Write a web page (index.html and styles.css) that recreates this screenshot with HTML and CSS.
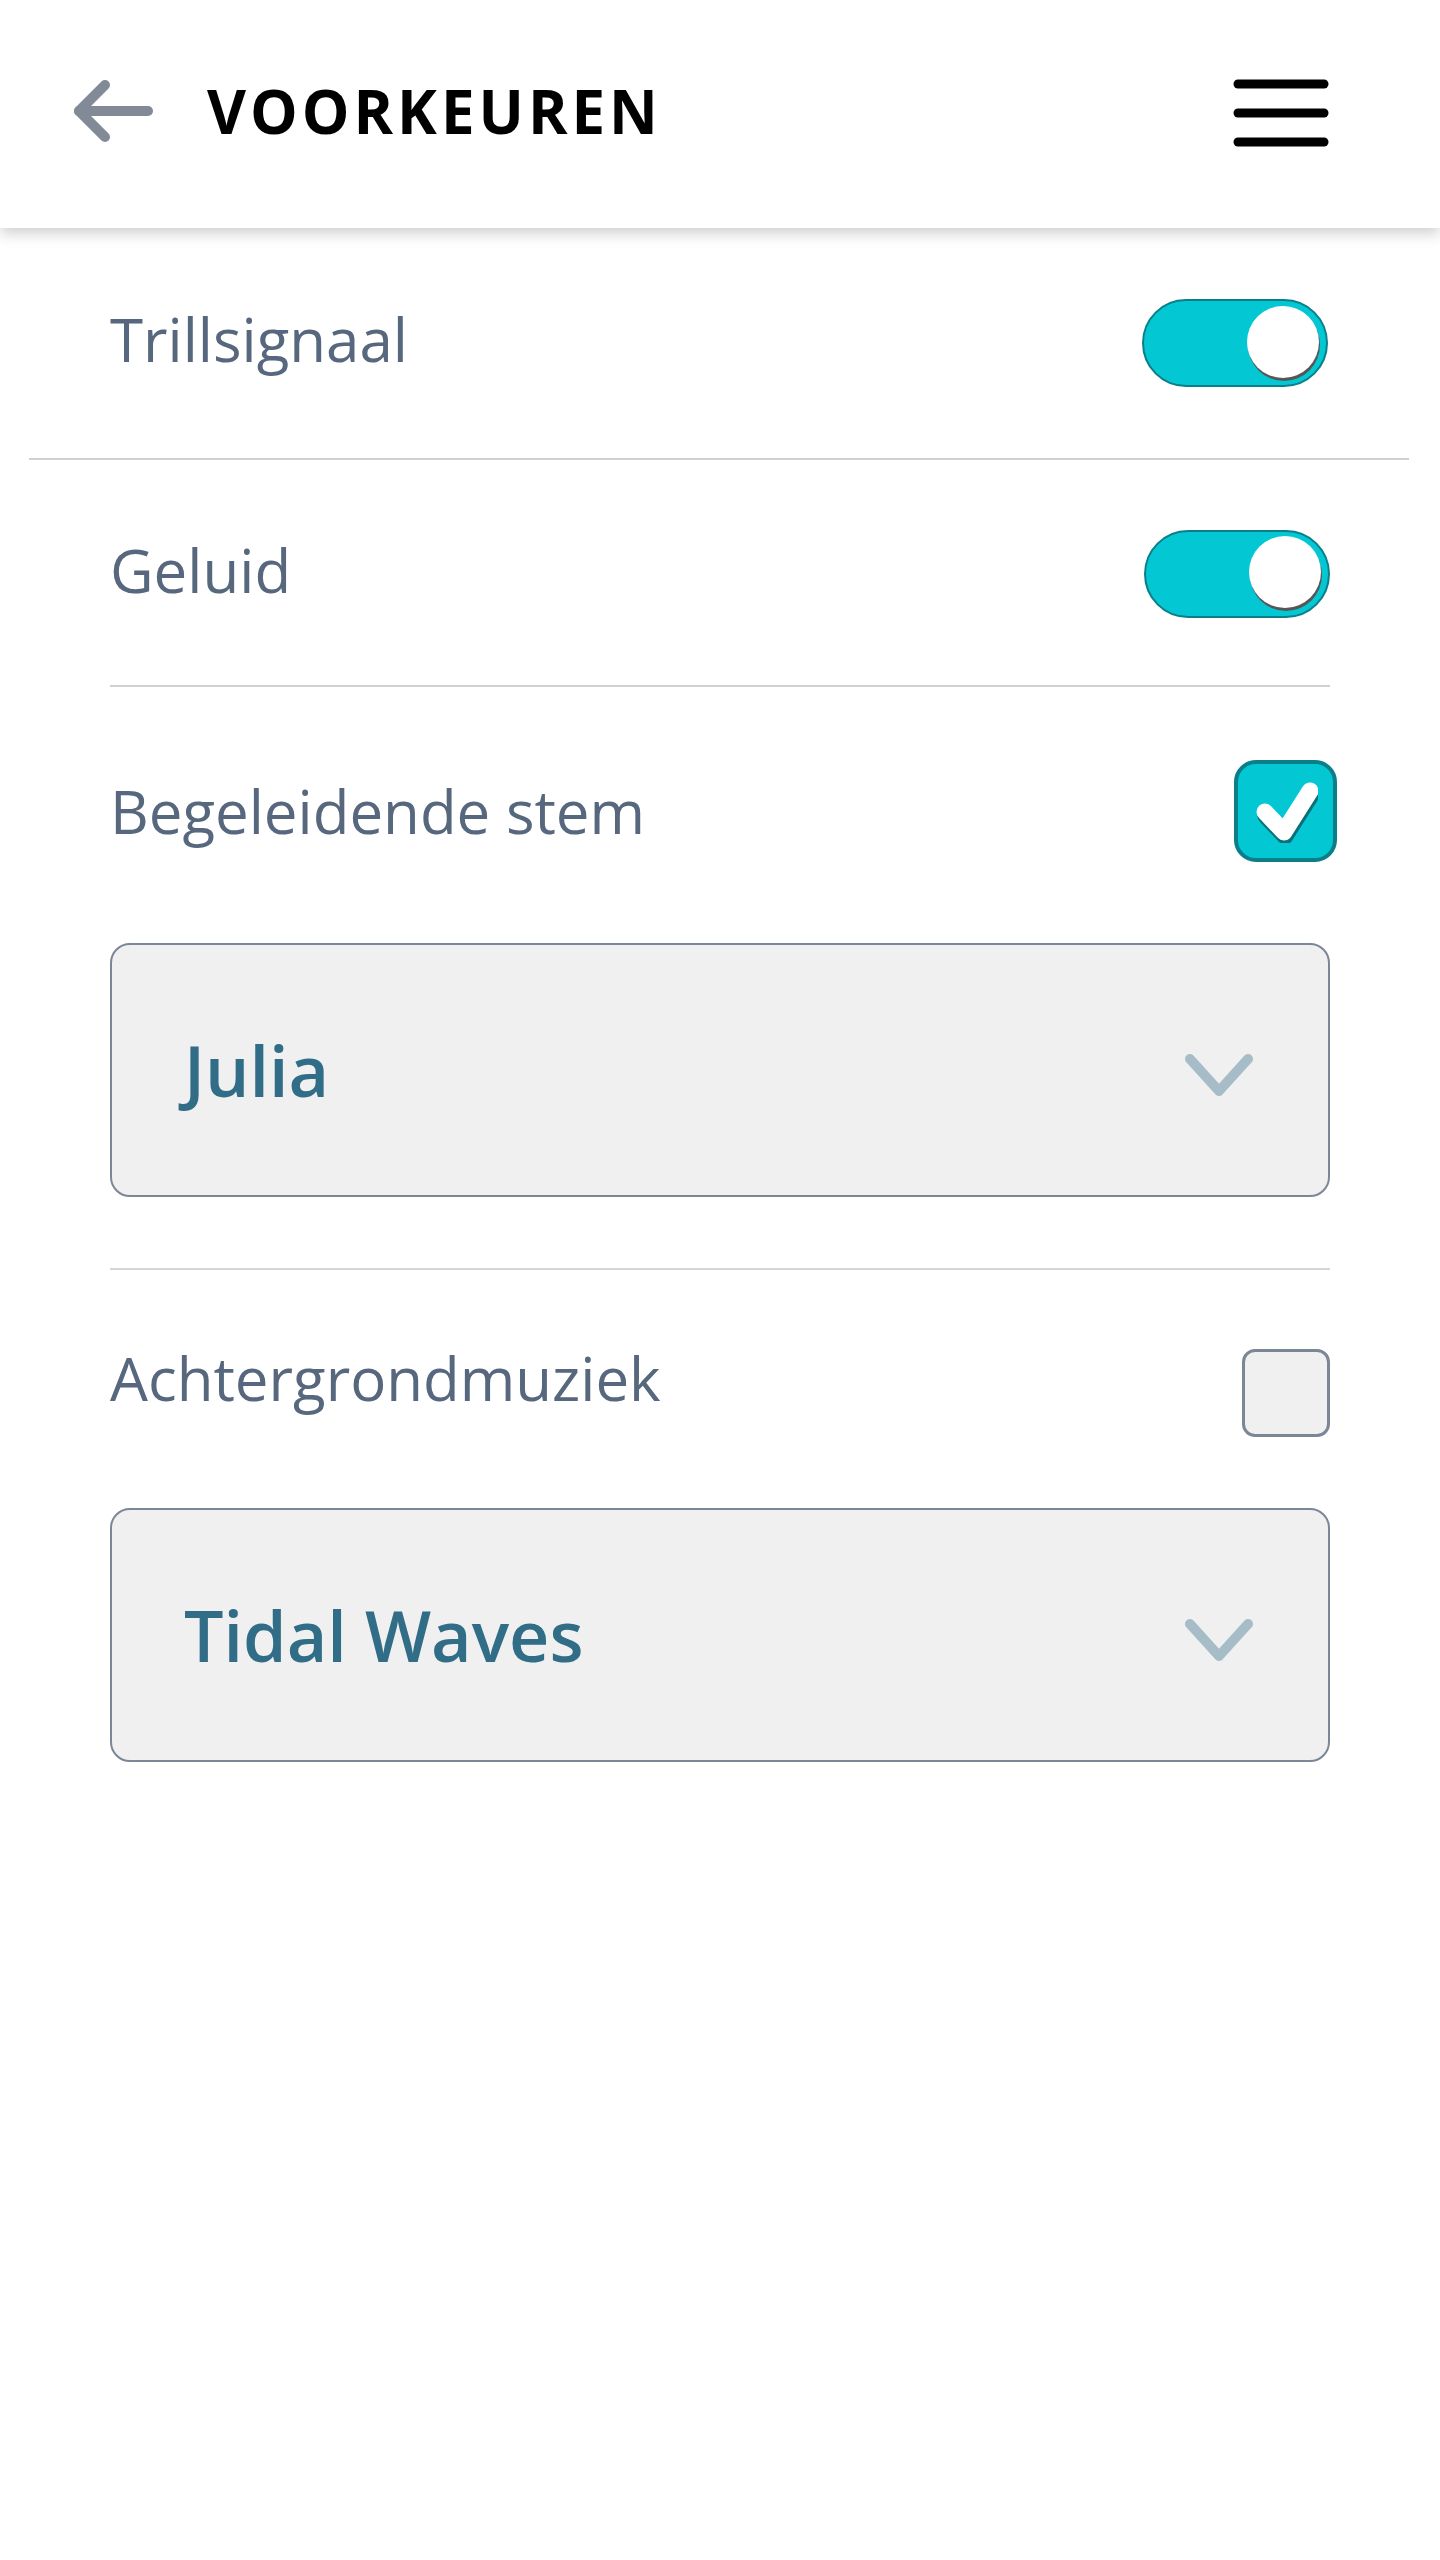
FILE: index.html
```html
<!DOCTYPE html>
<html lang="nl">
<head>
<meta charset="utf-8">
<title>Voorkeuren</title>
<link rel="stylesheet" href="styles.css">
</head>
<body>
<header class="topbar">
  <button class="icon-btn back" aria-label="Terug">
    <svg width="80" height="62" viewBox="0 0 80 62" fill="none" stroke="#818a96" stroke-width="10" stroke-linecap="round" stroke-linejoin="round">
      <path d="M6 31 H75"/>
      <path d="M32 5 L6 31 L32 57"/>
    </svg>
  </button>
  <h1 class="title">VOORKEUREN</h1>
  <button class="icon-btn menu" aria-label="Menu">
    <svg width="96" height="68" viewBox="0 0 96 68" fill="none" stroke="#000" stroke-width="9" stroke-linecap="round">
      <path d="M5 5 H91"/>
      <path d="M5 34 H91"/>
      <path d="M5 63 H91"/>
    </svg>
  </button>
</header>

<main class="settings">
  <div class="row row-wide">
    <span class="label label-top">Trillsignaal</span>
    <span class="toggle on"><span class="knob"></span></span>
  </div>

  <div class="row row-sound">
    <span class="label label-top">Geluid</span>
    <span class="toggle on"><span class="knob"></span></span>
  </div>

  <div class="group group-voice">
    <div class="line">
      <span class="label">Begeleidende stem</span>
      <span class="check checked">
        <svg width="64" height="64" viewBox="0 0 64 64" fill="none" stroke-linecap="round" stroke-linejoin="round" stroke-width="17">
          <path d="M12 37 L31 57 L57 16" stroke="#0b6f79"/>
          <path d="M11 33 L30 53 L56 12" stroke="#ffffff"/>
        </svg>
      </span>
    </div>
    <div class="select">
      <span class="select-value">Julia</span>
      <svg class="chev" width="68" height="42" viewBox="0 0 68 42" fill="none" stroke="#a6bdc8" stroke-width="10" stroke-linecap="round" stroke-linejoin="round">
        <path d="M5 5 L34 37 L63 5"/>
      </svg>
    </div>
  </div>

  <div class="group group-music">
    <div class="line">
      <span class="label label-up">Achtergrondmuziek</span>
      <span class="check"></span>
    </div>
    <div class="select">
      <span class="select-value">Tidal Waves</span>
      <svg class="chev" width="68" height="42" viewBox="0 0 68 42" fill="none" stroke="#a6bdc8" stroke-width="10" stroke-linecap="round" stroke-linejoin="round">
        <path d="M5 5 L34 37 L63 5"/>
      </svg>
    </div>
  </div>
</main>
</body>
</html>
```

FILE: styles.css
```css
* { box-sizing: border-box; }

html, body {
  margin: 0;
  padding: 0;
  background: #ffffff;
}

body {
  font-family: "Open Sans", "Noto Sans", "Liberation Sans", sans-serif;
  width: 1440px;
  min-height: 2560px;
}

.topbar {
  position: relative;
  z-index: 2;
  height: 228px;
  display: flex;
  align-items: center;
  padding: 0 111px 0 73px;
  background: #ffffff;
  box-shadow: 0 5px 14px rgba(0, 0, 0, 0.2);
}

.icon-btn {
  border: 0;
  background: none;
  padding: 0;
  margin: 0;
  display: flex;
  cursor: pointer;
}

.back { margin-top: -6px; }

.title {
  margin: -6px 0 0 54px;
  flex: 1;
  font-size: 60px;
  font-weight: 700;
  letter-spacing: 4px;
  color: #000000;
  line-height: 1;
}

.menu { margin-top: -2px; }

.settings {
  display: flex;
  flex-direction: column;
}

.row {
  display: flex;
  align-items: center;
  justify-content: space-between;
  border-bottom: 2px solid #d0d0d0;
}

.row-wide {
  height: 232px;
  margin: 0 31px 0 29px;
  padding: 0 81px;
}

.row-sound {
  height: 227px;
  margin: 0 110px;
  padding-top: 2px;
}

.label {
  font-size: 60px;
  font-weight: 400;
  color: #56677e;
  line-height: 1.2;
}

.label-top { margin-bottom: 8px; }

.label-up { margin-bottom: 30px; }

.toggle {
  width: 186px;
  height: 88px;
  border-radius: 44px;
  border: 2px solid #0a7f89;
  background: #04c7d4;
  display: flex;
  align-items: center;
  justify-content: flex-end;
  padding-right: 7px;
}

.knob {
  width: 72px;
  height: 72px;
  border-radius: 50%;
  background: #ffffff;
  box-shadow: 1px 3px 0 #565656;
  margin-top: -3px;
}

.group {
  margin: 0 110px;
  border-bottom: 2px solid #d6d6d6;
}

.group-voice {
  padding: 73px 0 71px;
}

.group-music {
  padding: 72px 0 0;
  border-bottom: 0;
}

.line {
  display: flex;
  align-items: center;
  justify-content: space-between;
}

.group-voice .line { margin-right: -7px; }

.check {
  width: 88px;
  height: 88px;
  border-radius: 13px;
  border: 3px solid #7b8796;
  background: #f0f0f0;
  display: flex;
  align-items: center;
  justify-content: center;
}

.check.checked {
  width: 103px;
  height: 102px;
  border-radius: 22px;
  border: 4px solid #0a7f89;
  background: #04c7d4;
}

.select {
  height: 254px;
  border: 2px solid #7b8796;
  border-radius: 20px;
  background: #f0f0f0;
  display: flex;
  align-items: center;
  justify-content: space-between;
  padding: 0 75px 0 72px;
}

.group-voice .select { margin-top: 81px; }
.group-music .select { margin-top: 64px; }

.select-value {
  font-size: 70px;
  font-weight: 600;
  color: #326d88;
  line-height: 1;
}

.chev { margin-top: 10px; }
```
